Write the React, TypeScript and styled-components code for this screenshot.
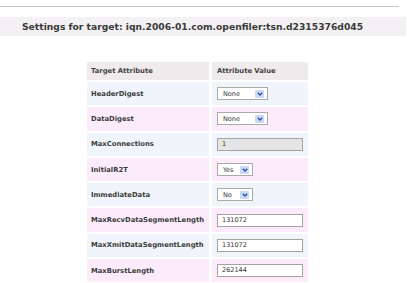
import { createGlobalStyle, styled } from "styled-components";

type Row = {
  name: string;
  kind: "select" | "text" | "locked";
  value: string;
  width?: number;
};

const rows: Row[] = [
  { name: "HeaderDigest", kind: "select", value: "None", width: 51 },
  { name: "DataDigest", kind: "select", value: "None", width: 51 },
  { name: "MaxConnections", kind: "locked", value: "1" },
  { name: "InitialR2T", kind: "select", value: "Yes", width: 36 },
  { name: "ImmediateData", kind: "select", value: "No", width: 36 },
  { name: "MaxRecvDataSegmentLength", kind: "text", value: "131072" },
  { name: "MaxXmitDataSegmentLength", kind: "text", value: "131072" },
  { name: "MaxBurstLength", kind: "text", value: "262144" },
];

const GlobalStyle = createGlobalStyle`
  html, body {
    margin: 0;
    padding: 0;
    background: #ffffff;
  }
  body {
    font-family: "DejaVu Sans", Verdana, sans-serif;
    color: #333333;
  }
`;

function Chevron() {
  return (
    <svg width="6" height="4" viewBox="0 0 6 4">
      <path d="M0.8 0.8 L3 3 L5.2 0.8" fill="none" stroke="#2b4f9a" strokeWidth="1.3" />
    </svg>
  );
}

function FakeSelect({ value, width }: { value: string; width: number }) {
  return (
    <SelectBox $width={width}>
      <SelectText>{value}</SelectText>
      <ArrowButton>
        <Chevron />
      </ArrowButton>
    </SelectBox>
  );
}

function App() {
  return (
    <Page>
      <GlobalStyle />
      <TopRule />
      <TitleBar>Settings for target: iqn.2006-01.com.openfiler:tsn.d2315376d045</TitleBar>
      <Table>
        <thead>
          <tr>
            <HeadCell $first>Target Attribute</HeadCell>
            <HeadCell>Attribute Value</HeadCell>
          </tr>
        </thead>
        <tbody>
          {rows.map((row, i) => (
            <tr key={row.name}>
              <NameCell $pink={i % 2 === 1}>{row.name}</NameCell>
              <ValueCell $pink={i % 2 === 1}>
                {row.kind === "select" && <FakeSelect value={row.value} width={row.width ?? 51} />}
                {row.kind === "text" && <TextBox>{row.value}</TextBox>}
                {row.kind === "locked" && <TextBox $locked>{row.value}</TextBox>}
              </ValueCell>
            </tr>
          ))}
        </tbody>
      </Table>
    </Page>
  );
}

export default App;

const Page = styled.div`
  width: 407px;
  height: 283px;
  overflow: hidden;
  padding-top: 6px;
  box-sizing: border-box;
`;

const TopRule = styled.div`
  width: 399px;
  height: 1px;
  background: #c9c9c9;
`;

const TitleBar = styled.div`
  margin-top: 10px;
  width: 406px;
  height: 19px;
  background: #f3f1f3;
  box-sizing: border-box;
  padding-left: 22px;
  font-size: 9.2px;
  font-weight: bold;
  line-height: 19px;
  color: #3a3a3a;
  white-space: nowrap;
`;

const Table = styled.table`
  margin-top: 24px;
  margin-left: 84px;
  border-collapse: separate;
  border-spacing: 3px 2px;
  font-size: 6.8px;
  table-layout: fixed;
`;

const HeadCell = styled.th<{ $first?: boolean }>`
  width: ${(p) => (p.$first ? "118px" : "91px")};
  height: 18px;
  padding: 0 0 0 ${(p) => (p.$first ? "4px" : "5px")};
  background: #efebed;
  text-align: left;
  font-weight: bold;
  color: #444444;
  white-space: nowrap;
`;

const NameCell = styled.td<{ $pink: boolean }>`
  height: 23.3px;
  padding: 0 0 0 4px;
  background: ${(p) => (p.$pink ? "#fcecfb" : "#eff5fb")};
  font-weight: bold;
  color: #3c3c3c;
  white-space: nowrap;
`;

const ValueCell = styled.td<{ $pink: boolean }>`
  height: 23.3px;
  padding: 0 0 0 5px;
  background: ${(p) => (p.$pink ? "#fcecfb" : "#eff5fb")};
`;

const SelectBox = styled.div<{ $width: number }>`
  width: ${(p) => p.$width}px;
  height: 13px;
  box-sizing: border-box;
  border: 1px solid #a9a9a9;
  background: #ffffff;
  display: flex;
  align-items: center;
  justify-content: space-between;
  padding: 0 3px 0 5px;
`;

const SelectText = styled.span`
  font-size: 6.5px;
  color: #333333;
`;

const ArrowButton = styled.span`
  width: 9px;
  height: 8px;
  background: #c9daf6;
  border-radius: 1px;
  display: flex;
  align-items: center;
  justify-content: center;
`;

const TextBox = styled.div<{ $locked?: boolean }>`
  width: 86px;
  height: 13px;
  box-sizing: border-box;
  border: 1px solid #a3a3a3;
  background: ${(p) => (p.$locked ? "#e5e5e5" : "#ffffff")};
  padding-left: 4px;
  font-size: 6.5px;
  line-height: 11px;
  color: #333333;
`;
